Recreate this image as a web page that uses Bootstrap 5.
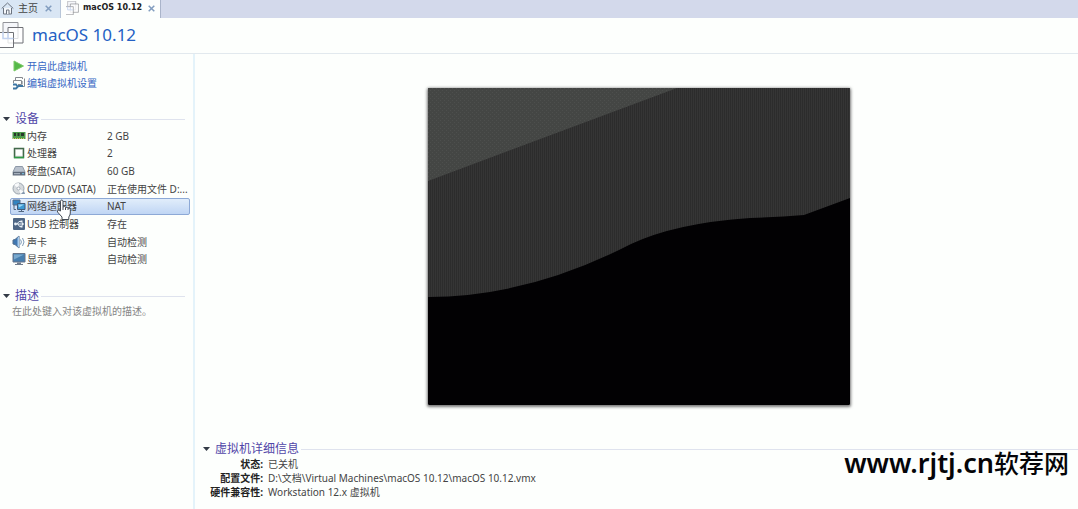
<!DOCTYPE html>
<html lang="zh-CN">
<head>
<meta charset="utf-8">
<meta name="viewport" content="width=device-width, initial-scale=1">
<title>macOS 10.12</title>
<link rel="stylesheet" href="https://cdn.jsdelivr.net/npm/bootstrap@5.3.0/dist/css/bootstrap.min.css">
<style>
  body { font-family: "Noto Sans", "Noto Sans CJK SC", sans-serif; font-size: 10px; line-height: 14px; color: #444; background: #fdfffd; }
  button { font: inherit; color: inherit; background: none; border: 0; padding: 0; text-align: left; }
  svg { flex: none; display: block; }
  .tabstrip { height: 18px; background: #d3d9eb; }
  .vm-tab { height: 18px; padding: 0 8px 2px 1px; }
  .tab-home { width: 61px; background: #d9e6f4; border-right: 1px solid #b8c6d8; }
  .tab-current { width: 100px; background: #fdfffd; padding: 0 5px 2px 5px; border-right: 1px solid #aab4ca; }
  .tab-title { font: 700 8px/14px "DejaVu Sans", sans-serif; color: #222; }
  .vm-header { height: 36px; padding-bottom: 2px; border-bottom: 1px solid #e2e9ee; }
  .vm-header h1 { font-size: 17px; line-height: 24px; color: #2461c4; }
  .side { width: 195px; border-right: 2px solid #e4f3fa; padding-top: 3px; }
  .action { height: 17px; color: #3767c4; text-decoration: none; padding-left: 12px; gap: 1px; }
  .section-title { font-size: 12px; line-height: 16px; height: 16px; color: #5146a8; gap: 5px; padding-left: 3px; }
  .rule { height: 1px; background: #dfe3ee; margin-left: -3px; }
  .devices { height: 141px; margin: 0 3px 0 10px; }
  .device { border: 1px solid transparent; border-radius: 2px; padding-left: 1px; gap: 1px; white-space: nowrap; }
  .device .name { width: 79px; }
  .device.selected { border-color: #8da9d6; background: linear-gradient(#e1edfb, #c0d6f4); }
  .note { color: #858585; padding: 0 12px; }
  .stage { padding: 34px 0 0 5px; }
  .screen { width: 100%; max-width: 422px; aspect-ratio: 422 / 317; box-shadow: 0 1px 3px 1px #777; border-radius: 1px; overflow: hidden; }
  .facts { display: grid; grid-template-columns: 60px 1fr; column-gap: 5px; margin: 0 0 10px 8px; }
  .facts dt { text-align: right; color: #222; white-space: nowrap; }
  .facts dd { margin: 0; }
  .site-mark { right: 9px; bottom: 29px; font: 500 25px/34px "Noto Sans CJK SC", sans-serif; color: #050508; }
  .site-host { font: 600 27px/34px "Noto Sans", sans-serif; }
  .pointer { left: 45px; top: 0; }
</style>
<script src="https://cdn.jsdelivr.net/npm/bootstrap@5.3.0/dist/js/bootstrap.bundle.min.js"></script>
</head>
<body class="min-vh-100 d-flex flex-column position-relative">

<svg width="0" height="0" class="position-absolute" aria-hidden="true">
  <symbol id="stack" viewBox="0 0 24 26">
    <path d="M3 .5h15v16H3z" fill="#f5f7fa" stroke="#929499"/>
    <path d="M8 5.500h15v15.500H8z" fill="#fff" fill-opacity=".7" stroke="#6f7176"/>
    <path d="M-1 10.500h14.500v15H-1z" fill="#fff" fill-opacity=".8" stroke="#6f7176"/>
    <path d="M3 10v6.500h10.500M8 10.500V16" fill="none" stroke="#c3d3ef" stroke-width="1.500"/>
  </symbol>
  <symbol id="close" viewBox="0 0 7 7"><path d="M.7.7l5.600 5.600M6.300.7L.7 6.300" stroke="#829dbf" stroke-width="1.500"/></symbol>
</svg>

<nav class="tabstrip d-flex" aria-label="标签页">
  <div class="vm-tab tab-home d-flex align-items-center">
    <svg width="13" height="13" viewBox="0 0 13 13" fill="#f4f7fb" stroke="#6c7480"><path d="M2.500 6v6h8V6"/><path d="M.7 6.500l5.800-5.500 5.800 5.500" fill="none"/><path d="M5.500 12V8h2.500v4"/></svg>
    <button type="button" class="ms-1 flex-fill text-nowrap">主页</button>
    <button type="button" aria-label="关闭主页"><svg width="7" height="7"><use href="#close"/></svg></button>
  </div>
  <div class="vm-tab tab-current d-flex align-items-center">
    <svg width="13" height="14"><use href="#stack"/></svg>
    <button type="button" class="tab-title flex-fill text-nowrap ms-1">macOS 10.12</button>
    <button type="button" aria-label="关闭 macOS 10.12"><svg width="7" height="7"><use href="#close"/></svg></button>
  </div>
</nav>

<header class="vm-header d-flex align-items-center gap-2">
  <svg width="24" height="26"><use href="#stack"/></svg>
  <h1 class="m-0 fw-normal">macOS 10.12</h1>
</header>

<div class="d-flex flex-fill">
  <aside class="side flex-shrink-0">
    <a href="#" class="action d-flex align-items-center">
      <svg width="14" height="12" viewBox="0 0 14 12"><path d="M2 1l9.500 5L2 11z" fill="#55b848" stroke="#7bc967"/></svg>开启此虚拟机</a>
    <a href="#" class="action d-flex align-items-center">
      <svg width="14" height="14" viewBox="0 0 14 14" fill="none"><path d="M3.500 4V1.500h7V3" stroke="#85898f"/><path d="M12.500 2.500v8H7" stroke="#85898f"/><path d="M1.500 7V4.500h8v4H6" stroke="#85898f"/><path d="M10.500 5v3.500" stroke="#b2b6bb"/><path d="M1 8.500h3l2 2.500M6 10.500l-2 2H1M6 10h5" stroke="#3e77a3" stroke-width="1.800"/></svg>编辑虚拟机设置</a>

    <section class="mt-3 pt-1">
      <h2 class="section-title d-flex align-items-center m-0 fw-normal">
        <svg width="7" height="4" viewBox="0 0 7 4"><path d="M0 0h7L3.500 4z" fill="#333b46"/></svg>设备<span class="rule flex-fill me-2"></span></h2>
      <div class="devices d-flex flex-column">
        <button type="button" class="device flex-fill d-flex align-items-center">
          <svg width="14" height="14" viewBox="0 0 14 14"><path d="M.5 3h13v7H.5z" fill="#4d9c4b"/><path d="M2 4h2v3H2zM5.500 4h2v3h-2zM9 4h3v3H9z" fill="#28382b"/><path d="M1 9.500h12" stroke="#d6c65b" stroke-dasharray="1 1"/></svg>
          <span class="name">内存</span><span>2 GB</span></button>
        <button type="button" class="device flex-fill d-flex align-items-center">
          <svg width="14" height="14" viewBox="0 0 14 14"><path d="M2.500 2.500h9v9h-9z" fill="#e6e9e6" stroke="#42694a" stroke-width="1.500"/><path d="M2 11.500h10" stroke="#2d9b45" stroke-width="1.500"/><path d="M4 4h6v5.500H4z" fill="#fff"/></svg>
          <span class="name">处理器</span><span>2</span></button>
        <button type="button" class="device flex-fill d-flex align-items-center">
          <svg width="14" height="14" viewBox="0 0 14 14"><path d="M3.500 2.500h7L13 8H1z" fill="#b9c2cd" stroke="#8c98a7"/><path d="M.7 8h12.600v3.500H.7z" fill="#5f6b7a"/><path d="M2 9.700h6" stroke="#b5c0cc"/><path d="M10 9.700h2" stroke="#78c8eb"/></svg>
          <span class="name">硬盘(SATA)</span><span>60 GB</span></button>
        <button type="button" class="device flex-fill d-flex align-items-center">
          <svg width="14" height="14" viewBox="0 0 14 14"><circle cx="6.500" cy="6.500" r="5.500" fill="#d5dadd" stroke="#9aa4ae"/><path d="M6.500 6.500L2 3a6 6 0 0 1 5-2zM6.500 6.500l5 3a5 5 0 0 1-3 2.500z" fill="#f8fafb"/><circle cx="6.500" cy="6.500" r="1.500" fill="#fff" stroke="#a4adb7"/><path d="M9 12l3-3 1 3z" fill="#8297ae"/></svg>
          <span class="name">CD/DVD (SATA)</span><span>正在使用文件 D:...</span></button>
        <button type="button" class="device selected flex-fill d-flex align-items-center position-relative">
          <svg width="14" height="14" viewBox="0 0 14 14"><path d="M1 1h7v5H1z" fill="#3284c1" stroke="#536b89"/><path d="M5.500 4.500h7.500v6H5.500z" fill="#3e9ad4" stroke="#435c7b"/><path d="M6.500 12.500H12M9.500 11v1.500M2 6v4.500h2" fill="none" stroke="#526880"/><path d="M6.500 5.500H12L7 8.500z" fill="#9dd7f5"/></svg>
          <span class="name">网络适配器</span><span>NAT</span>
          <svg class="pointer position-absolute z-1" width="16" height="22" viewBox="0 0 16 22"><path d="M4.500 12V2.500q0-1.500 1.200-1.500T7 2.500V8q2-1.500 2.500.5 2-1 2.500.7 2.300-.7 2.300 1.500V14q0 2-1.500 4v2.500H6V18l-4.500-5q-.7-1.700 1-1.700z" fill="#fff" stroke="#454b55"/><path d="M7 8v3M9.500 8.500V11M12 9.200V11" stroke="#454b55" fill="none"/></svg></button>
        <button type="button" class="device flex-fill d-flex align-items-center">
          <svg width="14" height="14" viewBox="0 0 14 14"><rect x="1" y="1" width="12" height="12" rx="1" fill="#4e6684"/><path d="M3 7h8M5 7l2-2.500h2M6 7l1.500 2.500H9" fill="none" stroke="#e9f0f6"/><circle cx="3.500" cy="7" r="1.400" fill="#e9f0f6"/><path d="M10 5.200L12.300 7 10 8.800zM8.500 3.500h2v2h-2zM8.500 8.500h2v2h-2z" fill="#e9f0f6"/></svg>
          <span class="name">USB 控制器</span><span>存在</span></button>
        <button type="button" class="device flex-fill d-flex align-items-center">
          <svg width="14" height="14" viewBox="0 0 14 14"><path d="M1 5l2-.5L7 1v12L3 9.500 1 9z" fill="#3f77b1" stroke="#526e8d"/><path d="M5.500 3L7 1v12l-1.500-2z" fill="#a9cdee"/><path d="M8.500 4.500q1.800 2.500 0 5M10.500 3q3 4 0 8" fill="none" stroke="#7e9bb8"/></svg>
          <span class="name">声卡</span><span>自动检测</span></button>
        <button type="button" class="device flex-fill d-flex align-items-center">
          <svg width="14" height="14" viewBox="0 0 14 14"><path d="M1 1.500h12v8.500H1z" fill="#477faf" stroke="#66758a"/><path d="M2 2.500h10l-10 5z" fill="#79a9ce"/><path d="M5 10.500h4v1.500h2v1H3v-1h2z" fill="#717d8d"/></svg>
          <span class="name">显示器</span><span>自动检测</span></button>
      </div>
    </section>

    <section class="mt-3 pt-1">
      <h2 class="section-title d-flex align-items-center m-0 fw-normal">
        <svg width="7" height="4" viewBox="0 0 7 4"><path d="M0 0h7L3.500 4z" fill="#333b46"/></svg>描述<span class="rule flex-fill me-2"></span></h2>
      <p class="note m-0">在此处键入对该虚拟机的描述。</p>
    </section>
  </aside>

  <main class="flex-fill d-flex flex-column">
    <div class="stage">
      <div class="screen mx-auto">
        <svg class="w-100 h-100" viewBox="0 0 422 317" preserveAspectRatio="none" role="img" aria-label="虚拟机屏幕">
          <defs>
            <pattern id="weave" width="2" height="2" patternUnits="userSpaceOnUse"><path d="M0 0h2v2H0z" fill="#353535"/><path d="M0 0h1v2H0z" fill="#2c2c2c"/></pattern>
            <pattern id="glow" width="4" height="4" patternUnits="userSpaceOnUse"><path d="M0 0h4v4H0z" fill="#444644"/><path d="M0 0h1v1H0zM2 2h1v1H2z" fill="#4d4f4d"/></pattern>
          </defs>
          <path d="M0 0h422v317H0z" fill="#020103"/>
          <path d="M0 0h422v110L376 127Q350 129 322 130Q248 135 203 156Q100 209 0 209z" fill="url(#weave)"/>
          <path d="M0 0h249L0 93z" fill="url(#glow)"/>
        </svg>
      </div>
    </div>
    <section class="mt-auto">
      <h2 class="section-title d-flex align-items-center m-0 fw-normal ms-1 ps-1">
        <svg width="7" height="4" viewBox="0 0 7 4"><path d="M0 0h7L3.500 4z" fill="#333b46"/></svg>虚拟机详细信息<span class="rule flex-fill"></span></h2>
      <dl class="facts">
        <dt>状态:</dt><dd>已关机</dd>
        <dt>配置文件:</dt><dd>D:\文档\Virtual Machines\macOS 10.12\macOS 10.12.vmx</dd>
        <dt>硬件兼容性:</dt><dd>Workstation 12.x 虚拟机</dd>
      </dl>
    </section>
  </main>
</div>

<div class="site-mark position-absolute"><span class="site-host">www.rjtj.cn</span>软荐网</div>
</body>
</html>
